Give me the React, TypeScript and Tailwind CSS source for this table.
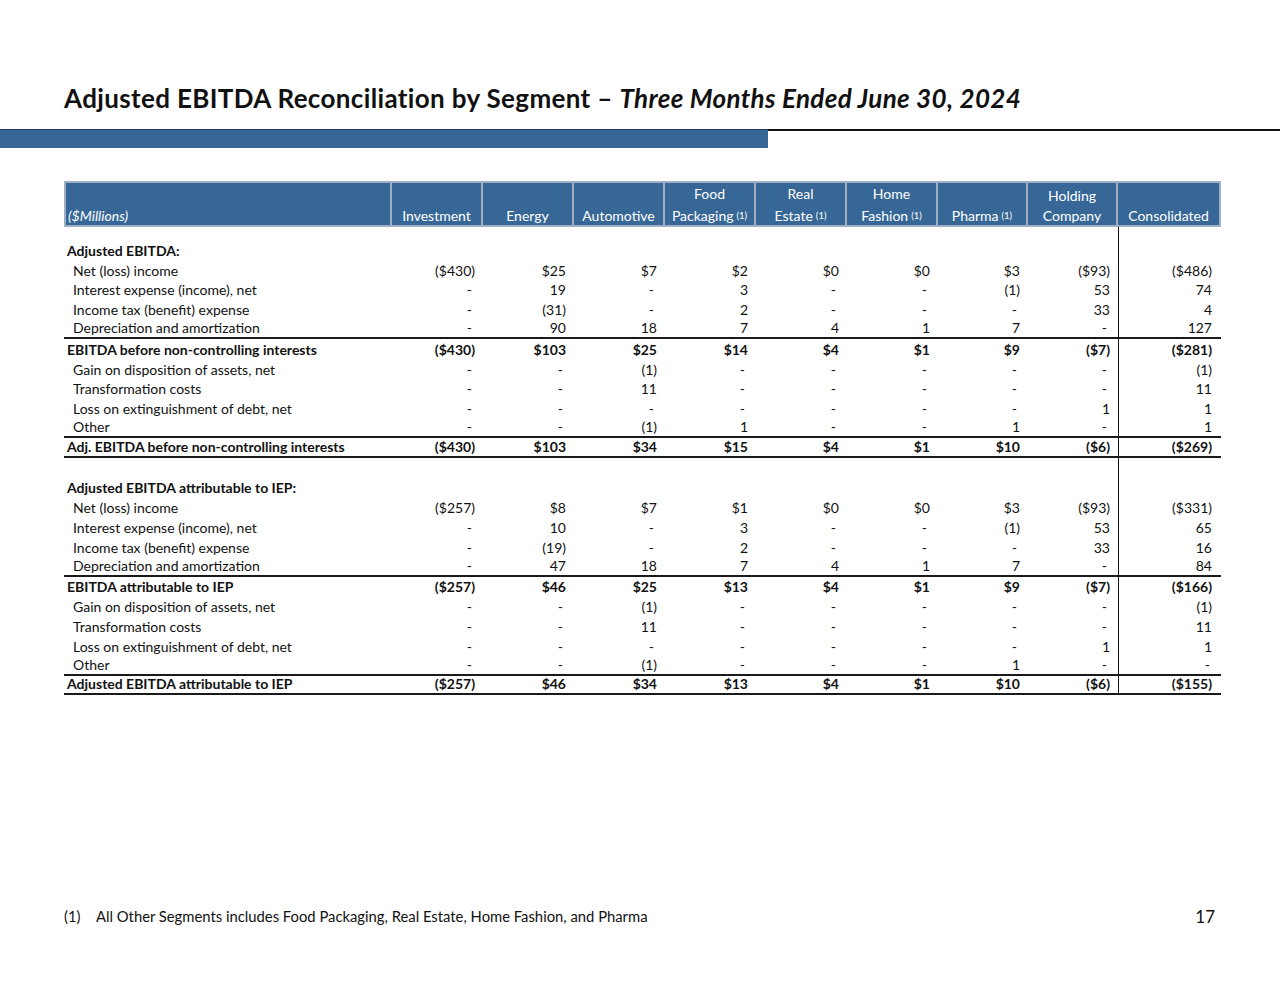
import React from 'react';

type Row = {
  label: string;
  values?: string[];
  kind: 'section' | 'item' | 'total' | 'blank';
  rule?: boolean;
};

const rows: Row[] = [
  { label: 'Adjusted EBITDA:', kind: 'section' },
  { label: 'Net (loss) income', kind: 'item', values: ['($430)', '$25', '$7', '$2', '$0', '$0', '$3', '($93)', '($486)'] },
  { label: 'Interest expense (income), net', kind: 'item', values: ['-', '19', '-', '3', '-', '-', '(1)', '53', '74'] },
  { label: 'Income tax (benefit) expense', kind: 'item', values: ['-', '(31)', '-', '2', '-', '-', '-', '33', '4'] },
  { label: 'Depreciation and amortization', kind: 'item', rule: true, values: ['-', '90', '18', '7', '4', '1', '7', '-', '127'] },
  { label: 'EBITDA before non-controlling interests', kind: 'total', values: ['($430)', '$103', '$25', '$14', '$4', '$1', '$9', '($7)', '($281)'] },
  { label: 'Gain on disposition of assets, net', kind: 'item', values: ['-', '-', '(1)', '-', '-', '-', '-', '-', '(1)'] },
  { label: 'Transformation costs', kind: 'item', values: ['-', '-', '11', '-', '-', '-', '-', '-', '11'] },
  { label: 'Loss on extinguishment of debt, net', kind: 'item', values: ['-', '-', '-', '-', '-', '-', '-', '1', '1'] },
  { label: 'Other', kind: 'item', rule: true, values: ['-', '-', '(1)', '1', '-', '-', '1', '-', '1'] },
  { label: 'Adj. EBITDA before non-controlling interests', kind: 'total', rule: true, values: ['($430)', '$103', '$34', '$15', '$4', '$1', '$10', '($6)', '($269)'] },
  { label: '', kind: 'blank' },
  { label: 'Adjusted EBITDA attributable to IEP:', kind: 'section' },
  { label: 'Net (loss) income', kind: 'item', values: ['($257)', '$8', '$7', '$1', '$0', '$0', '$3', '($93)', '($331)'] },
  { label: 'Interest expense (income), net', kind: 'item', values: ['-', '10', '-', '3', '-', '-', '(1)', '53', '65'] },
  { label: 'Income tax (benefit) expense', kind: 'item', values: ['-', '(19)', '-', '2', '-', '-', '-', '33', '16'] },
  { label: 'Depreciation and amortization', kind: 'item', rule: true, values: ['-', '47', '18', '7', '4', '1', '7', '-', '84'] },
  { label: 'EBITDA attributable to IEP', kind: 'total', values: ['($257)', '$46', '$25', '$13', '$4', '$1', '$9', '($7)', '($166)'] },
  { label: 'Gain on disposition of assets, net', kind: 'item', values: ['-', '-', '(1)', '-', '-', '-', '-', '-', '(1)'] },
  { label: 'Transformation costs', kind: 'item', values: ['-', '-', '11', '-', '-', '-', '-', '-', '11'] },
  { label: 'Loss on extinguishment of debt, net', kind: 'item', values: ['-', '-', '-', '-', '-', '-', '-', '1', '1'] },
  { label: 'Other', kind: 'item', rule: true, values: ['-', '-', '(1)', '-', '-', '-', '1', '-', '-'] },
  { label: 'Adjusted EBITDA attributable to IEP', kind: 'total', rule: true, values: ['($257)', '$46', '$34', '$13', '$4', '$1', '$10', '($6)', '($155)'] },
];

const widths = ['w-[328px]', 'w-[91px]', 'w-[91px]', 'w-[91px]', 'w-[91px]', 'w-[91px]', 'w-[91px]', 'w-[90px]', 'w-[90px]', 'w-[103px]'];

function Sup() {
  return <sup className="text-[9.5px] ml-[3px] relative -top-[2px]">(1)</sup>;
}

function HeaderCell({ children, w, left }: { children: React.ReactNode; w: string; left?: boolean }) {
  return (
    <div
      className={`${w} shrink-0 flex items-end border-r-2 border-[#9fb0c4] last:border-r-0 leading-[22px] ${
        left ? 'justify-start pl-[2px] italic' : 'justify-center text-center'
      }`}
    >
      <div className="relative top-[2px]">{children}</div>
    </div>
  );
}

function TableRow({ row }: { row: Row }) {
  const bold = row.kind === 'section' || row.kind === 'total';
  return (
    <div className={`flex h-[19.8px] items-end leading-[18px] ${row.rule ? 'border-b-2 border-[#1a1a1a]' : ''}`}>
      <div className={`${widths[0]} shrink-0 whitespace-nowrap ${bold ? 'font-bold pl-[3px]' : 'pl-[9px]'}`}>{row.label}</div>
      {widths.slice(1).map((w, i) => {
        const v = row.values?.[i] ?? '';
        return (
          <div
            key={i}
            className={`${w} shrink-0 h-full flex items-end justify-end ${i === 8 ? 'border-l border-[#111] pr-[9px]' : 'pr-[8px]'} ${
              bold ? 'font-bold' : ''
            } ${v === '-' ? 'pr-[11px]' : ''}`}
          >
            {v}
          </div>
        );
      })}
    </div>
  );
}

export default function App() {
  return (
    <div className="w-[1280px] h-[989px] bg-white flex flex-col text-[#111] font-['Lato',sans-serif]">
      <h1 className="pl-[64px] pt-[82px] text-[26px] font-bold leading-[32px] tracking-[0.35px] whitespace-nowrap">
        Adjusted EBITDA Reconciliation by Segment – <span className="italic">Three Months Ended June 30, 2024</span>
      </h1>

      <div className="flex mt-[15px]">
        <div className="w-[768px] h-[19px] bg-[#376796] border-t border-[#1f3b56]" />
        <div className="flex-1 border-t-2 border-[#111]" />
      </div>

      <div className="ml-[64px] mt-[33px] w-[1157px] text-[14px]">
        <div className="flex h-[46px] bg-[#376796] text-white border-2 border-[#9fb0c4]">
          <HeaderCell w="w-[326px]" left>($Millions)</HeaderCell>
          <HeaderCell w={widths[1]}>Investment</HeaderCell>
          <HeaderCell w={widths[2]}>Energy</HeaderCell>
          <HeaderCell w={widths[3]}>Automotive</HeaderCell>
          <HeaderCell w={widths[4]}>
            Food
            <br />
            Packaging
            <Sup />
          </HeaderCell>
          <HeaderCell w={widths[5]}>
            Real
            <br />
            Estate
            <Sup />
          </HeaderCell>
          <HeaderCell w={widths[6]}>
            Home
            <br />
            Fashion
            <Sup />
          </HeaderCell>
          <HeaderCell w={widths[7]}>
            Pharma
            <Sup />
          </HeaderCell>
          <HeaderCell w={widths[8]}>
            <span className="leading-[19px] block">Holding</span>
            Company
          </HeaderCell>
          <HeaderCell w="w-[101px]">Consolidated</HeaderCell>
        </div>

        <div className="flex h-[13px]">
          <div className="w-[1054px] shrink-0" />
          <div className="border-l border-[#111]" />
        </div>

        {rows.map((row, i) => (
          <TableRow key={i} row={row} />
        ))}
      </div>

      <div className="flex-1" />

      <div className="flex items-center justify-between pl-[64px] pr-[65px] pb-[60px] text-[14.8px]">
        <div className="flex">
          <span className="w-[32px]">(1)</span>
          <span>All Other Segments includes Food Packaging, Real Estate, Home Fashion, and Pharma</span>
        </div>
        <span className="text-[17px]">17</span>
      </div>
    </div>
  );
}
